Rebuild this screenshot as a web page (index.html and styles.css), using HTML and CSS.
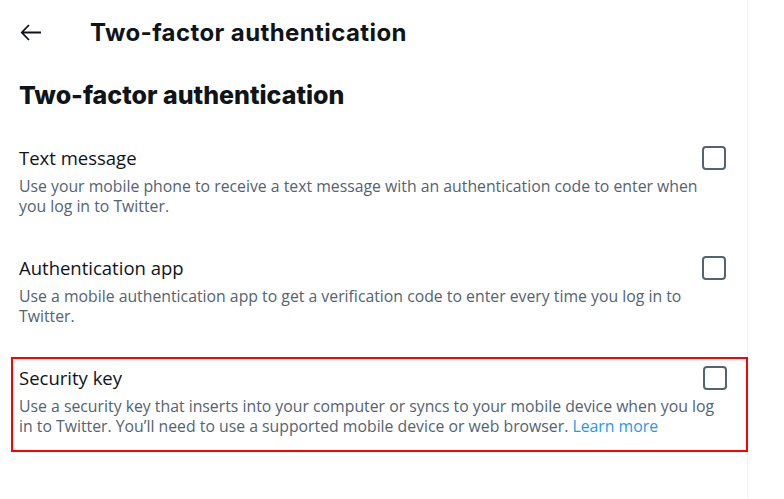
FILE: index.html
```html
<!DOCTYPE html>
<html lang="en">

<head>
    <meta charset="UTF-8">
    <meta name="viewport" content="width=device-width, initial-scale=1.0">
    <title>Two-factor authentication</title>
    <link rel="stylesheet" href="styles.css">
</head>

<body>
    <div class="column">
        <div class="topbar">
            <button class="back" aria-label="Back">
                <svg viewBox="0 0 26 26" width="26" height="26">
                    <path d="M4 12.5H23M11 5L3.8 12.5L11 20" fill="none" stroke="#0f1419" stroke-width="1.8" />
                </svg>
            </button>
            <h1>Two-factor authentication</h1>
        </div>

        <h2>Two-factor authentication</h2>

        <div class="options">
            <div class="option">
                <div class="option-head">
                    <span class="option-title">Text message</span>
                    <span class="checkbox"></span>
                </div>
                <p class="option-desc">Use your mobile phone to receive a text message with an authentication code to enter when<br>you log in to Twitter.</p>
            </div>

            <div class="option">
                <div class="option-head">
                    <span class="option-title">Authentication app</span>
                    <span class="checkbox"></span>
                </div>
                <p class="option-desc">Use a mobile authentication app to get a verification code to enter every time you log in to<br>Twitter.</p>
            </div>

            <div class="option selected">
                <div class="option-head">
                    <span class="option-title">Security key</span>
                    <span class="checkbox"></span>
                </div>
                <p class="option-desc">Use a security key that inserts into your computer or syncs to your mobile device when you log<br>in to Twitter. You’ll need to use a supported mobile device or web browser. <a href="#">Learn more</a></p>
            </div>
        </div>
    </div>
</body>

</html>
```

FILE: styles.css
```css
/* General */
body {
    margin: 0;
    background: #fff;
    color: #0f1419;
    font-family: "Open Sans", "Noto Sans", sans-serif;
}

.column {
    width: 747px;
    min-height: 100vh;
    border-right: 1px solid #eff3f4;
}

/* Top bar */
.topbar {
    display: flex;
    align-items: center;
    height: 66px;
    padding-left: 18px;
}

.back {
    display: flex;
    width: 26px;
    height: 26px;
    padding: 0;
    border: none;
    background: none;
    cursor: pointer;
}

h1 {
    margin: 0 0 0 46px;
    font-family: Inter, sans-serif;
    font-size: 24px;
    font-weight: 700;
    letter-spacing: 0.4px;
    line-height: 28px;
}

h2 {
    margin: 15px 0 0;
    padding: 0 19px;
    font-family: Inter, sans-serif;
    font-size: 25px;
    font-weight: 800;
    line-height: 28px;
}

/* Options */
.options {
    margin-top: 28px;
    padding-left: 11px;
}

.option {
    border: 2px solid transparent;
    padding: 7px 19px 14px 6px;
}

.option + .option {
    margin-top: 15px;
}

.option.selected {
    border-color: #ff0000;
    margin-right: -1px;
}

.option-head {
    display: flex;
    justify-content: space-between;
    align-items: center;
}

.option-title {
    font-size: 18.5px;
    line-height: 24px;
}

.checkbox {
    width: 24px;
    height: 24px;
    box-sizing: border-box;
    border: 2px solid #536471;
    border-radius: 4px;
}

.option-desc {
    margin: 6px 0 0;
    color: #536471;
    font-size: 15.8px;
    line-height: 20px;
    white-space: nowrap;
}

.option-desc a {
    color: #1d9bf0;
    text-decoration: none;
}
```
